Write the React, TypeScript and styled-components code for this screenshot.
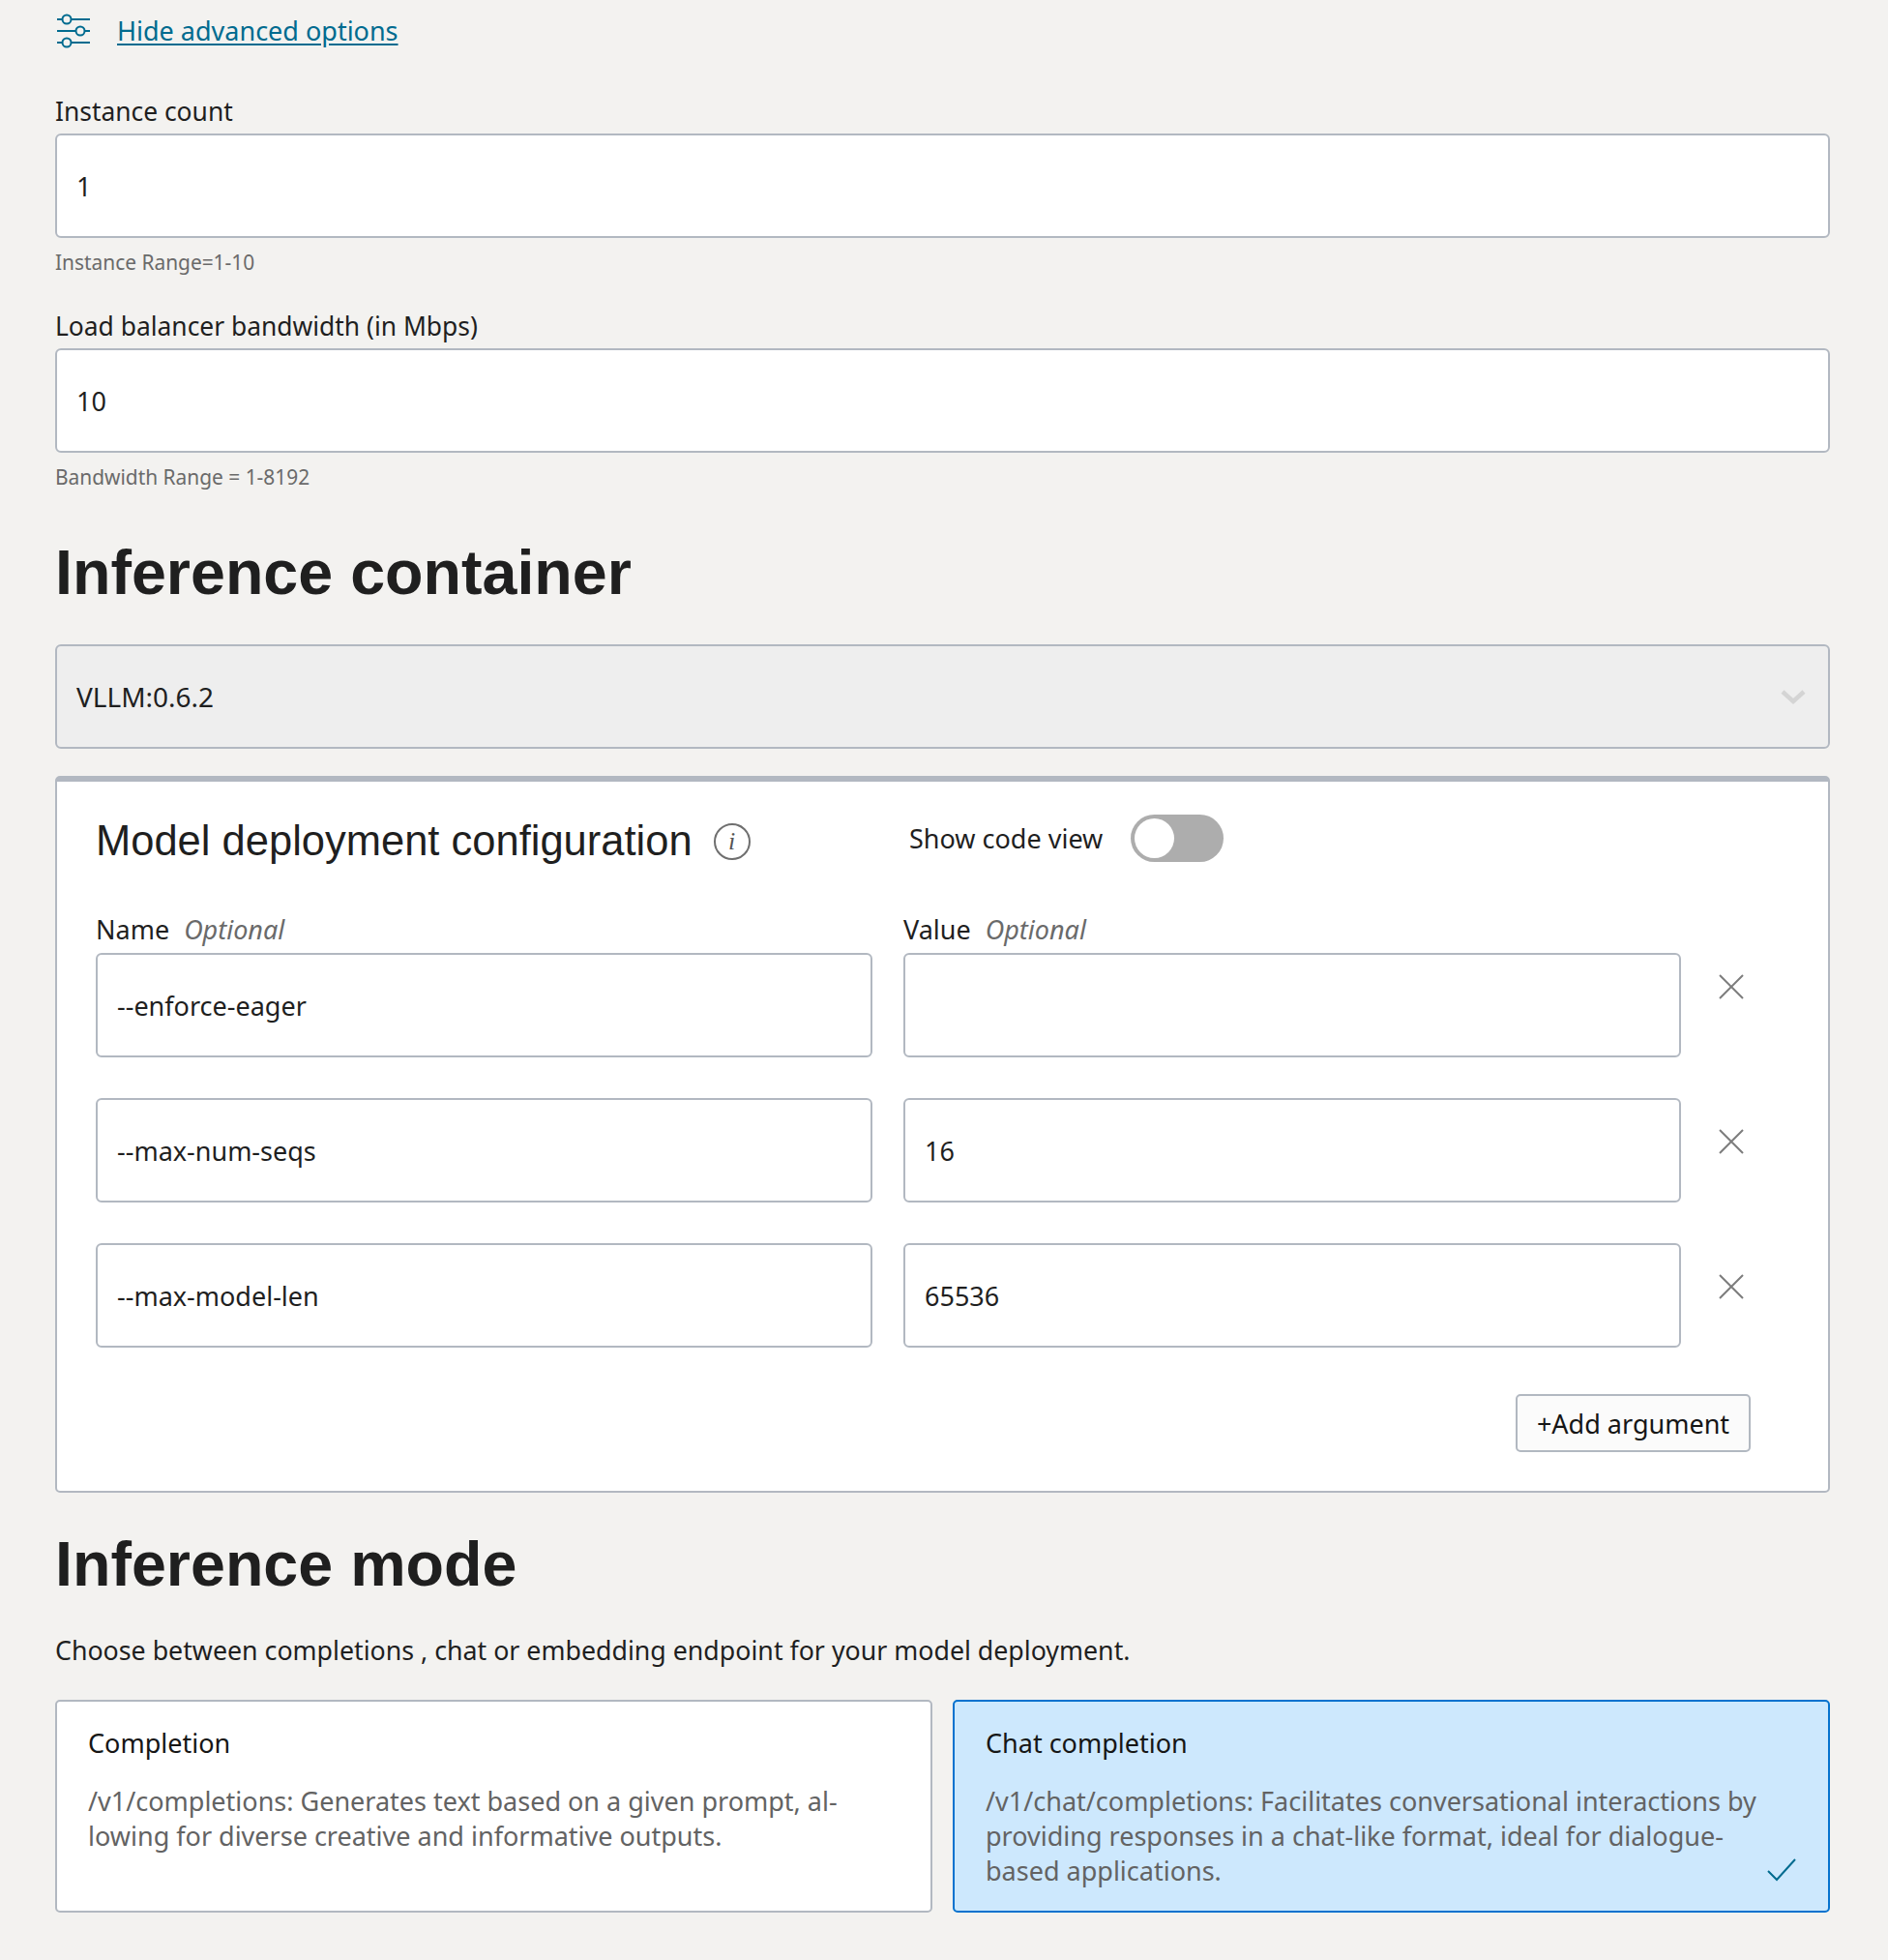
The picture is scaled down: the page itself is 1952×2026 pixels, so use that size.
import React from "react";
import styled, { createGlobalStyle } from "styled-components";

const Global = createGlobalStyle`
  html, body { margin: 0; padding: 0; background: #f3f2f0; }
  body { font-family: "Noto Sans", "Open Sans", sans-serif; color: #1f1f1f; }
  * { box-sizing: border-box; }
`;

const Page = styled.div`
  width: 1952px;
  min-height: 2026px;
  padding: 15px 60px 49px 57px;
`;
const ToggleLink = styled.div`
  display: flex;
  align-items: center;
  height: 33px;
  gap: 27px;
  padding-left: 2px;
`;
const LinkText = styled.a`
  font-size: 27px;
  line-height: 33px;
  color: #006b8f;
  text-decoration: underline;
  text-underline-offset: 3px;
`;
const Field = styled.div<{ $top: number }>`
  margin-top: ${(p) => p.$top}px;
`;
const Label = styled.div`
  font-size: 26.4px;
  line-height: 32px;
  color: #1f1f1f;
  margin-bottom: 7px;
`;
const Optional = styled.span`
  font-style: italic;
  color: #6a6a6a;
  margin-left: 15px;
`;
const Input = styled.div`
  height: 108px;
  background: #fff;
  border: 2px solid #b2b8c1;
  border-radius: 6px;
  padding: 0 20px;
  display: flex;
  align-items: center;
  justify-content: space-between;
  font-size: 27px;
  color: #1f1f1f;
`;
const Select = styled(Input)`
  background: #eeeeee;
  font-size: 28px;
`;
const Help = styled.div`
  margin-top: 12px;
  font-size: 20.9px;
  line-height: 26px;
  color: #6a6a6a;
`;
const Heading = styled.h2<{ $top: number }>`
  margin: ${(p) => p.$top}px 0 0;
  font-family: "Liberation Sans", Arial, sans-serif;
  font-weight: 700;
  font-size: 64.6px;
  line-height: 76px;
  color: #1f1f1f;
`;
const Panel = styled.section`
  margin-top: 28px;
  background: #fff;
  border: 2px solid #b2b8c1;
  border-top-width: 6px;
  border-radius: 5px;
  padding: 35px 80px 40px 40px;
`;
const PanelHeader = styled.div`
  display: flex;
  align-items: flex-start;
  height: 52px;
`;
const TitleGroup = styled.div`
  width: 841px;
  display: flex;
  align-items: center;
  gap: 22px;
`;
const PanelTitle = styled.h3`
  margin: 0;
  font-family: "Liberation Sans", Arial, sans-serif;
  font-weight: 400;
  font-size: 43.5px;
  line-height: 52px;
  color: #1f1f1f;
`;
const InfoBadge = styled.span`
  width: 38px;
  height: 38px;
  border: 2px solid #6f6f6f;
  border-radius: 50%;
  display: flex;
  align-items: center;
  justify-content: center;
  font-family: "Liberation Serif", serif;
  font-style: italic;
  font-size: 26px;
  color: #555;
  margin-top: 2px;
`;
const CodeView = styled.div`
  display: flex;
  align-items: center;
  height: 49px;
  margin-top: -1px;
  gap: 29px;
  font-size: 27px;
`;
const Switch = styled.span`
  width: 96px;
  height: 49px;
  border-radius: 25px;
  background: #adadad;
  padding: 4px;
  display: flex;
`;
const Knob = styled.span`
  width: 41px;
  height: 41px;
  border-radius: 50%;
  background: #fff;
`;
const ArgsGrid = styled.div`
  margin-top: 50px;
  display: grid;
  grid-template-columns: 803px 804px 1fr;
  column-gap: 32px;
`;
const ColHead = styled(Label)`
  font-size: 27px;
  margin-bottom: 8px;
`;
const ArgRow = styled.div<{ $top: number }>`
  grid-column: 1 / -1;
  display: grid;
  grid-template-columns: 803px 804px 1fr;
  column-gap: 32px;
  margin-top: ${(p) => p.$top}px;
`;
const RemoveCell = styled.div<{ $pad: number }>`
  padding-top: ${(p) => p.$pad}px;
  padding-left: 6px;
  color: #7d7d7d;
  line-height: 0;
`;
const ButtonRow = styled.div`
  margin-top: 48px;
  display: flex;
  justify-content: flex-end;
`;
const AddButton = styled.button`
  width: 243px;
  height: 60px;
  background: #fbfbfb;
  border: 2px solid #b2b8c1;
  border-radius: 5px;
  font-family: inherit;
  font-size: 27px;
  color: #161616;
  padding: 0;
`;
const Intro = styled.p`
  margin: 34px 0 0;
  font-size: 26.75px;
  line-height: 34px;
`;
const Cards = styled.div`
  margin-top: 34px;
  display: grid;
  grid-template-columns: 907px 907px;
  column-gap: 21px;
`;
const Card = styled.div<{ $selected?: boolean }>`
  position: relative;
  height: 220px;
  background: ${(p) => (p.$selected ? "#cde8fd" : "#fff")};
  border: 2px solid ${(p) => (p.$selected ? "#0572ce" : "#b2b8c1")};
  border-radius: 5px;
  padding: 26px 32px 0;
`;
const CardTitle = styled.div`
  font-size: 27px;
  line-height: 34px;
  color: #161616;
`;
const CardText = styled.div`
  margin-top: 25px;
  font-size: 27px;
  line-height: 36px;
  color: #636363;
`;
const Check = styled.span`
  position: absolute;
  right: 33px;
  bottom: 30px;
  line-height: 0;
  color: #006b8f;
`;
const ChevronWrap = styled.span`
  color: #d4d4d4;
  line-height: 0;
  margin-right: 3px;
`;

const SlidersIcon = () => (
  <svg width="35" height="36" viewBox="0 0 35 36" fill="none" stroke="#006b8f" strokeWidth="2">
    <path d="M0 6h5M15 6h19" />
    <circle cx="10" cy="6" r="4.5" />
    <path d="M0 18h19M29 18h5" />
    <circle cx="24" cy="18" r="4.5" />
    <path d="M0 30h5M15 30h19" />
    <circle cx="10" cy="30" r="4.5" />
  </svg>
);
const CloseIcon = () => (
  <svg width="28" height="28" viewBox="0 0 28 28" fill="none" stroke="currentColor" strokeWidth="2">
    <path d="M2 2l24 24M26 2L2 26" />
  </svg>
);
const ChevronIcon = () => (
  <svg width="26" height="18" viewBox="0 0 26 18" fill="none" stroke="currentColor" strokeWidth="4.5">
    <path d="M2 4l11 10L24 4" />
  </svg>
);
const CheckIcon = () => (
  <svg width="30" height="24" viewBox="0 0 30 24" fill="none" stroke="currentColor" strokeWidth="2">
    <path d="M1 13l9 9L29 1" />
  </svg>
);

const rows = [
  { name: "--enforce-eager", value: "", pad: 21, top: 0 },
  { name: "--max-num-seqs", value: "16", pad: 31, top: 42 },
  { name: "--max-model-len", value: "65536", pad: 31, top: 42 },
];

export default function App() {
  return (
    <Page>
      <Global />
      <ToggleLink>
        <SlidersIcon />
        <LinkText>Hide advanced options</LinkText>
      </ToggleLink>

      <Field $top={51}>
        <Label>Instance count</Label>
        <Input>1</Input>
        <Help>Instance Range=1-10</Help>
      </Field>
      <Field $top={37}>
        <Label>Load balancer bandwidth (in Mbps)</Label>
        <Input>10</Input>
        <Help>Bandwidth Range = 1-8192</Help>
      </Field>

      <Heading $top={48}>Inference container</Heading>
      <Field $top={36}>
        <Select>
          VLLM:0.6.2
          <ChevronWrap>
            <ChevronIcon />
          </ChevronWrap>
        </Select>
      </Field>

      <Panel>
        <PanelHeader>
          <TitleGroup>
            <PanelTitle>Model deployment configuration</PanelTitle>
            <InfoBadge>i</InfoBadge>
          </TitleGroup>
          <CodeView>
            Show code view
            <Switch>
              <Knob />
            </Switch>
          </CodeView>
        </PanelHeader>
        <ArgsGrid>
          <ColHead>
            Name<Optional>Optional</Optional>
          </ColHead>
          <ColHead>
            Value<Optional>Optional</Optional>
          </ColHead>
          <span />
          {rows.map((r) => (
            <ArgRow key={r.name} $top={r.top}>
              <Input>{r.name}</Input>
              <Input>{r.value}</Input>
              <RemoveCell $pad={r.pad}>
                <CloseIcon />
              </RemoveCell>
            </ArgRow>
          ))}
        </ArgsGrid>
        <ButtonRow>
          <AddButton>+Add argument</AddButton>
        </ButtonRow>
      </Panel>

      <Heading $top={36}>Inference mode</Heading>
      <Intro>Choose between completions , chat or embedding endpoint for your model deployment.</Intro>
      <Cards>
        <Card>
          <CardTitle>Completion</CardTitle>
          <CardText>
            /v1/completions: Generates text based on a given prompt, al-
            <br />
            lowing for diverse creative and informative outputs.
          </CardText>
        </Card>
        <Card $selected>
          <CardTitle>Chat completion</CardTitle>
          <CardText>
            /v1/chat/completions: Facilitates conversational interactions by
            <br />
            providing responses in a chat-like format, ideal for dialogue-
            <br />
            based applications.
          </CardText>
          <Check>
            <CheckIcon />
          </Check>
        </Card>
      </Cards>
    </Page>
  );
}
